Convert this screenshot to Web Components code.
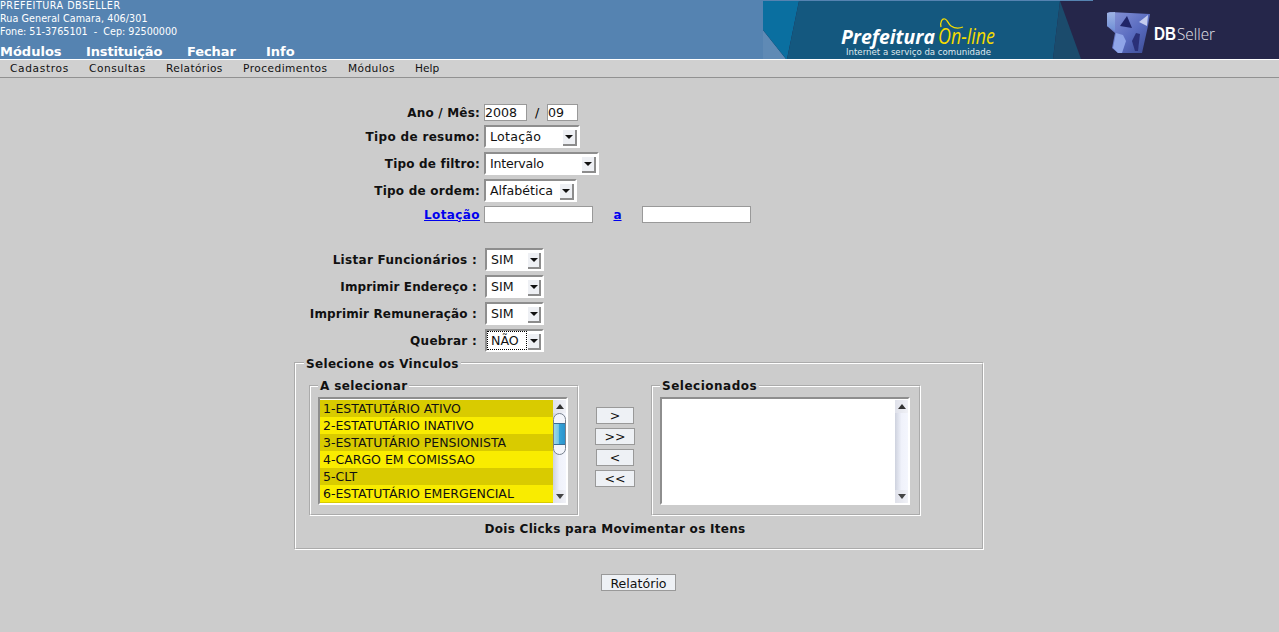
<!DOCTYPE html>
<html><head><meta charset="utf-8"><style>
html,body{margin:0;padding:0;background:#ccc;font-family:"DejaVu Sans",sans-serif;color:#000}
</style></head><body>
<app-header></app-header>
<app-menu></app-menu>
<form-page></form-page>
<script>
const def=(n,html)=>{customElements.define(n,class extends HTMLElement{constructor(){super();this.attachShadow({mode:'open'}).innerHTML=html;}})};

def('app-header',`<style>
:host{display:flex;height:59px;background:#5583b1;color:#fff;border-bottom:1px solid #fff;overflow:hidden}
.l{flex:1;display:flex;flex-direction:column;font-size:9.6px;line-height:13px}
.a{height:45px;margin-top:-1px;margin-bottom:2px}
.a div{white-space:pre}
nav{display:flex;font-size:13px;font-weight:bold;line-height:15px}
nav span{display:block}
svg{display:block;flex:none}
</style>
<div class="l"><div class="a"><div style="letter-spacing:.5px">PREFEITURA DBSELLER</div><div style="letter-spacing:.07px">Rua General Camara, 406/301</div><div>Fone: 51-3765101  -  Cep: 92500000</div></div>
<nav><span style="width:86px">Módulos</span><span style="width:101px;letter-spacing:-.15px">Instituição</span><span style="width:79px;letter-spacing:-.1px">Fechar</span><span>Info</span></nav></div>
<svg width="516" height="59" viewBox="763 0 516 59">
<defs><linearGradient id="g1" x1="0" y1="0" x2="1" y2="1"><stop offset="0" stop-color="#8b97d8"/><stop offset=".55" stop-color="#5a6cc0"/><stop offset="1" stop-color="#3a4a92"/></linearGradient>
<linearGradient id="g2" x1="0" y1="0" x2="0" y2="1"><stop offset="0" stop-color="#9fb4e4"/><stop offset="1" stop-color="#6f8fd6"/></linearGradient></defs>
<rect x="763" y="0" width="516" height="59" fill="#25264a"/>
<rect x="763" y="0" width="330" height="1" fill="#5583b1"/>
<polygon points="763,30 786,59 763,59" fill="#5f8ab5"/>
<polygon points="763,1 799,1 787,59 786,59 763,30" fill="#0a6fa0"/>
<polygon points="799,1 1060,1 1053,59 787,59" fill="#14587f"/>
<polygon points="1060,1 1081,59 1053,59" fill="#1b4b6c"/>
<text x="841" y="44" font-family="Open Sans" font-size="20" fill="#fff"><tspan font-style="italic" font-weight="700" textLength="94" lengthAdjust="spacingAndGlyphs">Prefeitura</tspan><tspan x="938" font-style="italic" font-weight="400" font-size="21" fill="#f5dc00" textLength="57" lengthAdjust="spacingAndGlyphs">On-line</tspan></text>
<path d="M941 27c-1-5 1-9 4-8s3 5 6 7 7 3 12 1" fill="none" stroke="#f5dc00" stroke-width="1.3"/>
<text x="846" y="55" font-family="DejaVu Sans" font-size="8.6" fill="#dfe8ee" textLength="145" lengthAdjust="spacingAndGlyphs">Internet a serviço da comunidade</text>
<path d="M1110 12l40 2-2 12-6 27h-24l-6-5 3-15-8-7v-13z" fill="url(#g1)"/>
<path d="M1107 13l8-1v19l-8-5z" fill="url(#g2)"/>
<path d="M1120 26l7-10 5 12z" fill="#1f2468"/>
<path d="M1113 48l3-15 7 2 3 6-4 12h-4z" fill="#8fa5e8"/>
<path d="M1136 33l4 1-2 17h-3l-3-10z" fill="#2a3078"/>
<path d="M1139 22l9-7-1 11z" fill="#c4ccee"/>
<text x="1154" y="40" font-family="Liberation Sans" font-weight="700" font-size="18" fill="#fff"><tspan textLength="22" lengthAdjust="spacingAndGlyphs">DB</tspan><tspan font-family="Open Sans" font-weight="300" font-size="17" fill="#e4e4ea" dx="1" textLength="38" lengthAdjust="spacingAndGlyphs">Seller</tspan></text>
</svg>`);

def('app-menu',`<style>
:host{display:flex;height:17px;background:#d0d0d0;border-bottom:1px solid #919191;font-size:10.6px;line-height:17px;padding-left:10px;color:#111}
span{display:block}
</style><span style="width:79px;letter-spacing:.67px">Cadastros</span><span style="width:77px;letter-spacing:.55px">Consultas</span><span style="width:77px;letter-spacing:.4px">Relatórios</span><span style="width:105px;letter-spacing:.46px">Procedimentos</span><span style="width:67px;letter-spacing:.4px">Módulos</span><span>Help</span>`);

def('x-input',`<style>
:host{display:block;box-sizing:border-box;height:17px;background:#fff;border:1px solid #999;font-size:12.6px;line-height:16px;overflow:hidden;white-space:nowrap;color:#111}
</style><slot></slot>`);

def('x-select',`<style>
:host{display:flex;box-sizing:border-box;height:23px;background:#fff;border:2px solid;border-color:#8e8e8e #fff #fff #8e8e8e;font-size:12.6px;line-height:19px;color:#111}
.t{flex:1;padding-left:4px;white-space:nowrap;margin-right:1px}
.b{flex:none;width:var(--bw,14px);height:16px;margin-top:3px;margin-right:1px;box-sizing:border-box;background:#eef0f4;border-right:2px solid #8c8c8c;border-bottom:2px solid #8c8c8c;display:flex;align-items:center;justify-content:center}
:host([focus]) .t{outline:1px dotted #000;outline-offset:-1px}
svg{display:block}
</style><span class="t"><slot></slot></span><span class="b"><svg width="8" height="4"><path d="M0 0h8l-4 4z" fill="#111"/></svg></span>`);

def('x-button',`<style>
:host{display:block;box-sizing:border-box;height:17px;background:#eef1f5;border:1px solid #999;text-align:center;font-size:12.6px;line-height:16px;color:#111;white-space:nowrap}
</style><slot></slot>`);

def('x-field',`<style>
:host{display:block;box-sizing:border-box}
fieldset{margin:0;padding:0;border:2px groove #fff;height:100%;box-sizing:border-box;min-width:0}
legend{padding:var(--lp,2px) 2px 0;margin-left:var(--lm,7px);font-size:12px;font-weight:bold;line-height:13px;color:#111}
</style><fieldset><legend><slot name="legend"></slot></legend><slot></slot></fieldset>`);

def('x-list',`<style>
:host{display:flex;box-sizing:border-box;width:250px;height:108px;background:#fff;border:2px solid;border-color:#8e8e8e #fff #fff #8e8e8e}
.i{flex:none;width:233px;margin-top:1px;height:103px;font-size:12.5px;line-height:17px;color:#111}
:host([thumb]) .i{background:#d9cb00}
::slotted(div){padding-left:3px;height:17px;background:#f9ec00}
::slotted(div:nth-child(odd)){background:#d9cb00}
.s{flex:none;width:13px;height:103px;margin-top:1px;background:linear-gradient(90deg,#ced2de,#f0f2fb 50%,#f4f6fd);display:flex;flex-direction:column}
.u,.d{height:13px;background:linear-gradient(90deg,#dfe1ea,#f0f1f6);display:flex;align-items:center;justify-content:center;flex:none}
.m{flex:1}
.th{display:none;box-sizing:border-box;height:42px;border:1px solid #77808c;border-radius:7px;overflow:hidden;background:#f3f5fb}
:host([thumb]) .th{display:block}
.c{height:22px;margin-top:9px;box-sizing:border-box;border-top:1px solid #3a6f96;border-bottom:1px solid #3a6f96;background:linear-gradient(90deg,#9ad6ea,#78c6e4 40%,#35a3d8 50%,#2a93cc)}
</style><div class="i"><slot></slot></div><div class="s"><div class="u"><svg width="8" height="5"><path d="M4 0l4 5H0z" fill="#333"/></svg></div><div class="m"><div class="th"><div class="c"></div></div></div><div class="d"><svg width="8" height="5"><path d="M0 0h8L4 5z" fill="#444"/></svg></div></div>`);

def('form-page',`<style>
:host{display:block;font-size:12px}
*{box-sizing:border-box}
.lb{font-weight:bold;color:#111;text-align:right;white-space:nowrap;justify-self:end}
.g1{display:grid;grid-template-columns:480px auto;column-gap:4px;row-gap:4px;padding-top:26px;justify-items:start;align-items:center}
.g2{display:grid;grid-template-columns:477px auto;column-gap:8px;row-gap:4px;margin-top:25px;justify-items:start;align-items:center}
.h{display:flex;align-items:center}
a{color:#00e;text-decoration:underline}
.outer{display:block;width:690px;height:196px;margin:2px 0 0 294px;--lm:8px;--lp:4px}
.row{display:flex;padding:0 0 0 13px;margin-top:7px;--lm:7px;--lp:2px}
.row>x-field{height:138px;width:270px}
.btns{width:72px;display:flex;flex-direction:column;align-items:center;gap:4px;padding-top:29px;flex:none}
.cap{font-weight:bold;letter-spacing:.28px;text-align:center;width:638px;margin-top:6px;line-height:15px;color:#111}
.rel{display:block;width:75px;margin:24px 0 0 601px;line-height:17px}
x-list{margin:4px 0 0 7px}
</style>
<div class="g1">
<div class="lb" style="letter-spacing:.2px">Ano / Mês:</div><div class="h" style="font-size:12.6px"><x-input style="width:43px">2008</x-input><span style="width:20px;text-align:center">/</span><x-input style="width:31px">09</x-input></div>
<div class="lb" style="letter-spacing:.33px">Tipo de resumo:</div><x-select style="width:96px;letter-spacing:.25px">Lotação</x-select>
<div class="lb" style="letter-spacing:.19px">Tipo de filtro:</div><x-select style="width:115px;letter-spacing:-.25px">Intervalo</x-select>
<div class="lb" style="letter-spacing:.24px">Tipo de ordem:</div><x-select style="width:93px">Alfabética</x-select>
<div class="lb" style="letter-spacing:.4px"><a href="#">Lotação</a></div><div class="h"><x-input style="width:109px"></x-input><a href="#" style="width:49px;text-align:center;font-weight:bold">a</a><x-input style="width:109px"></x-input></div>
</div>
<div class="g2">
<div class="lb" style="letter-spacing:.3px">Listar Funcionários :</div><x-select style="width:59px;--bw:13px">SIM</x-select>
<div class="lb" style="letter-spacing:.13px">Imprimir Endereço :</div><x-select style="width:59px;--bw:13px">SIM</x-select>
<div class="lb" style="letter-spacing:.15px">Imprimir Remuneração :</div><x-select style="width:59px;--bw:13px">SIM</x-select>
<div class="lb" style="letter-spacing:.28px">Quebrar :</div><x-select focus style="width:59px;--bw:13px">NÃO</x-select>
</div>
<x-field class="outer"><span slot="legend" style="letter-spacing:.33px">Selecione os Vinculos</span>
<div class="row">
<x-field><span slot="legend" style="letter-spacing:.37px">A selecionar</span><x-list thumb><div>1-ESTATUTÁRIO ATIVO</div><div>2-ESTATUTÁRIO INATIVO</div><div>3-ESTATUTÁRIO PENSIONISTA</div><div>4-CARGO EM COMISSAO</div><div>5-CLT</div><div>6-ESTATUTÁRIO EMERGENCIAL</div></x-list></x-field>
<div class="btns"><x-button style="width:38px">&gt;</x-button><x-button style="width:40px">&gt;&gt;</x-button><x-button style="width:38px">&lt;</x-button><x-button style="width:40px">&lt;&lt;</x-button></div>
<x-field><span slot="legend" style="letter-spacing:.5px">Selecionados</span><x-list></x-list></x-field>
</div>
<div class="cap">Dois Clicks para Movimentar os Itens</div>
</x-field>
<x-button class="rel">Relatório</x-button>`);
</script>
</body></html>
